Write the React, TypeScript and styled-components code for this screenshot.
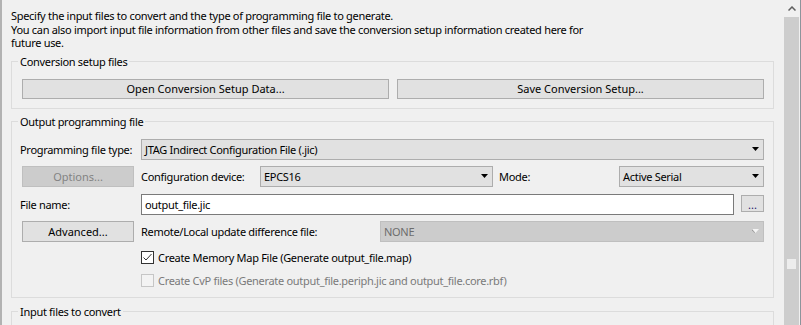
import React from 'react'
import styled, { createGlobalStyle } from 'styled-components'

const GlobalStyle = createGlobalStyle`
    html, body {
        margin:0;
        padding:0;
        overflow:hidden;
        background:#f0f0f0;
    }
    body {
        font-family:"Noto Sans", "Open Sans", sans-serif;
        font-size:11px;
        letter-spacing:-0.3px;
        color:#000;
    }
`

const Window = styled.div`
    display:flex;
    width:801px;
    height:325px;
    box-sizing:border-box;
    border-left:2px solid #b2b2b2;
    border-right:1px solid #8d949b;
    overflow:hidden;
`

const Content = styled.div`
    flex:1;
    min-width:0;
    padding:9px 10px 0 9px;
`

const Intro = styled.p`
    margin:0;
    line-height:13.5px;
    white-space:nowrap;
`

const Group = styled.fieldset<{ $top:number; $pb:number }>`
    margin:${p => p.$top}px 0 0;
    padding:10px 9px ${p => p.$pb}px 8px;
    border:1px solid #dcdcdc;
    min-width:0;
`

const Caption = styled.legend`
    padding:0 2px;
    margin-left:-2px;
    line-height:14px;
`

const ButtonPair = styled.div`
    display:grid;
    grid-template-columns:1fr 1fr;
    gap:8px;
    margin-left:2px;
`

const Button = styled.button<{ $w?:number }>`
    box-sizing:border-box;
    height:20px;
    width:${p => (p.$w ? `${p.$w}px` : '100%')};
    padding:0;
    background:#e1e1e1;
    border:1px solid #adadad;
    font:inherit;
    color:#000;
    &:disabled {
        background:#cccccc;
        border-color:#bfbfbf;
        color:#838383;
    }
`

const Row = styled.div<{ $mt:number; $h?:number }>`
    display:flex;
    align-items:center;
    height:${p => p.$h ?? 21}px;
    margin-top:${p => p.$mt}px;
`

const Lead = styled.div`
    width:121px;
    flex-shrink:0;
    display:flex;
    align-items:center;
    ${Button} {
        margin-left:2px;
        height:21px;
    }
`

const Label = styled.span<{ $w?:number; $ml?:number }>`
    flex-shrink:0;
    width:${p => (p.$w ? `${p.$w}px` : 'auto')};
    margin-left:${p => p.$ml ?? 0}px;
    white-space:nowrap;
`

const Combo = styled.div<{ $w?:number; $off?:boolean }>`
    box-sizing:border-box;
    display:flex;
    align-items:center;
    height:21px;
    ${p => (p.$w ? `width:${p.$w}px; flex-shrink:0;` : 'flex:1;')}
    padding:0 4px 0 3px;
    background:${p => (p.$off ? '#cccccc' : '#e1e1e1')};
    border:1px solid ${p => (p.$off ? '#bfbfbf' : '#adadad')};
    color:${p => (p.$off ? '#6d6d6d' : '#000')};
    span {
        flex:1;
        white-space:nowrap;
    }
`

const TextBox = styled.div`
    box-sizing:border-box;
    flex:1;
    height:21px;
    display:flex;
    align-items:center;
    padding-left:3px;
    background:#fff;
    border:1px solid #7a7a7a;
`

const Browse = styled.button`
    box-sizing:border-box;
    align-self:flex-start;
    margin:1px 0 0 7px;
    width:23px;
    height:17px;
    padding:0 0 1px;
    background:#e1e1e1;
    border:1px solid #adadad;
    font:inherit;
    line-height:10px;
    display:flex;
    align-items:flex-end;
    justify-content:center;
    color:#1a1a6a;
`

const CheckRow = styled(Row)`
    padding-left:121px;
    gap:4px;
`

const Box = styled.span<{ $off?:boolean }>`
    box-sizing:border-box;
    width:13px;
    height:13px;
    flex-shrink:0;
    display:flex;
    background:${p => (p.$off ? '#f3f3f3' : '#fff')};
    border:1px solid ${p => (p.$off ? '#c6c6c6' : '#333')};
`

const CheckText = styled.span<{ $off?:boolean }>`
    white-space:nowrap;
    color:${p => (p.$off ? '#7a7a7a' : '#000')};
`

const InputArea = styled.div`
    height:60px;
`

const Scrollbar = styled.div`
    width:15px;
    margin-right:1px;
    margin-left:auto;
    display:flex;
    flex-direction:column;
    flex-shrink:0;
`

const ScrollUp = styled.div`
    height:17px;
    display:flex;
    align-items:center;
    justify-content:center;
`

const Track = styled.div`
    flex:1;
    background:#cdcdcd;
`

const Grip = styled.div`
    width:9px;
    height:10px;
    margin:242px 0 0 3px;
    background:#ededed;
`

const Arrow = ({ off }:{ off?:boolean }) => (
    <svg width="7" height="4" viewBox="0 0 7 4">
        {off && <polygon points="0,0 7,0 3.5,4" fill="#9a9a9a" transform="translate(-1,0)" />}
        <polygon points="0,0 7,0 3.5,4" fill={off ? '#f4f4f4' : '#000'} />
    </svg>
)

const Tick = () => (
    <svg width="11" height="11" viewBox="0 0 11 11">
        <polyline points="1.5,5.5 4,8 9.5,2" fill="none" stroke="#333" strokeWidth="1" />
    </svg>
)

const App:React.FC = () => {
    return (
        <Window>
            <GlobalStyle />
            <Content>
                <Intro>
                    Specify the input files to convert and the type of programming file to generate.<br />
                    You can also import input file information from other files and save the conversion setup information created here for<br />
                    future use.
                </Intro>
                <Group $top={5} $pb={9}>
                    <Caption>Conversion setup files</Caption>
                    <ButtonPair>
                        <Button>Open Conversion Setup Data...</Button>
                        <Button>Save Conversion Setup...</Button>
                    </ButtonPair>
                </Group>
                <Group $top={6} $pb={5}>
                    <Caption>Output programming file</Caption>
                    <Row $mt={0}>
                        <Lead>Programming file type:</Lead>
                        <Combo><span>JTAG Indirect Configuration File (.jic)</span><Arrow /></Combo>
                    </Row>
                    <Row $mt={6}>
                        <Lead><Button $w={112} disabled>Options...</Button></Lead>
                        <Label $w={119}>Configuration device:</Label>
                        <Combo $w={233}><span>EPCS16</span><Arrow /></Combo>
                        <Label $w={120} $ml={6}>Mode:</Label>
                        <Combo><span>Active Serial</span><Arrow /></Combo>
                    </Row>
                    <Row $mt={7}>
                        <Lead>File name:</Lead>
                        <TextBox>output_file.jic</TextBox>
                        <Browse>...</Browse>
                    </Row>
                    <Row $mt={6}>
                        <Lead><Button $w={112}>Advanced...</Button></Lead>
                        <Label $w={239}>Remote/Local update difference file:</Label>
                        <Combo $off><span>NONE</span><Arrow off /></Combo>
                    </Row>
                    <CheckRow $mt={5}>
                        <Box><Tick /></Box>
                        <CheckText>Create Memory Map File (Generate output_file.map)</CheckText>
                    </CheckRow>
                    <CheckRow $mt={2} $h={22}>
                        <Box $off />
                        <CheckText $off>Create CvP files (Generate output_file.periph.jic and output_file.core.rbf)</CheckText>
                    </CheckRow>
                </Group>
                <Group $top={7} $pb={0}>
                    <Caption>Input files to convert</Caption>
                    <InputArea />
                </Group>
            </Content>
            <Scrollbar>
                <ScrollUp>
                    <svg width="8" height="5" viewBox="0 0 8 5">
                        <polyline points="0.5,4.5 4,1 7.5,4.5" fill="none" stroke="#606060" strokeWidth="1.5" />
                    </svg>
                </ScrollUp>
                <Track><Grip /></Track>
            </Scrollbar>
        </Window>
    )
}

export default App
